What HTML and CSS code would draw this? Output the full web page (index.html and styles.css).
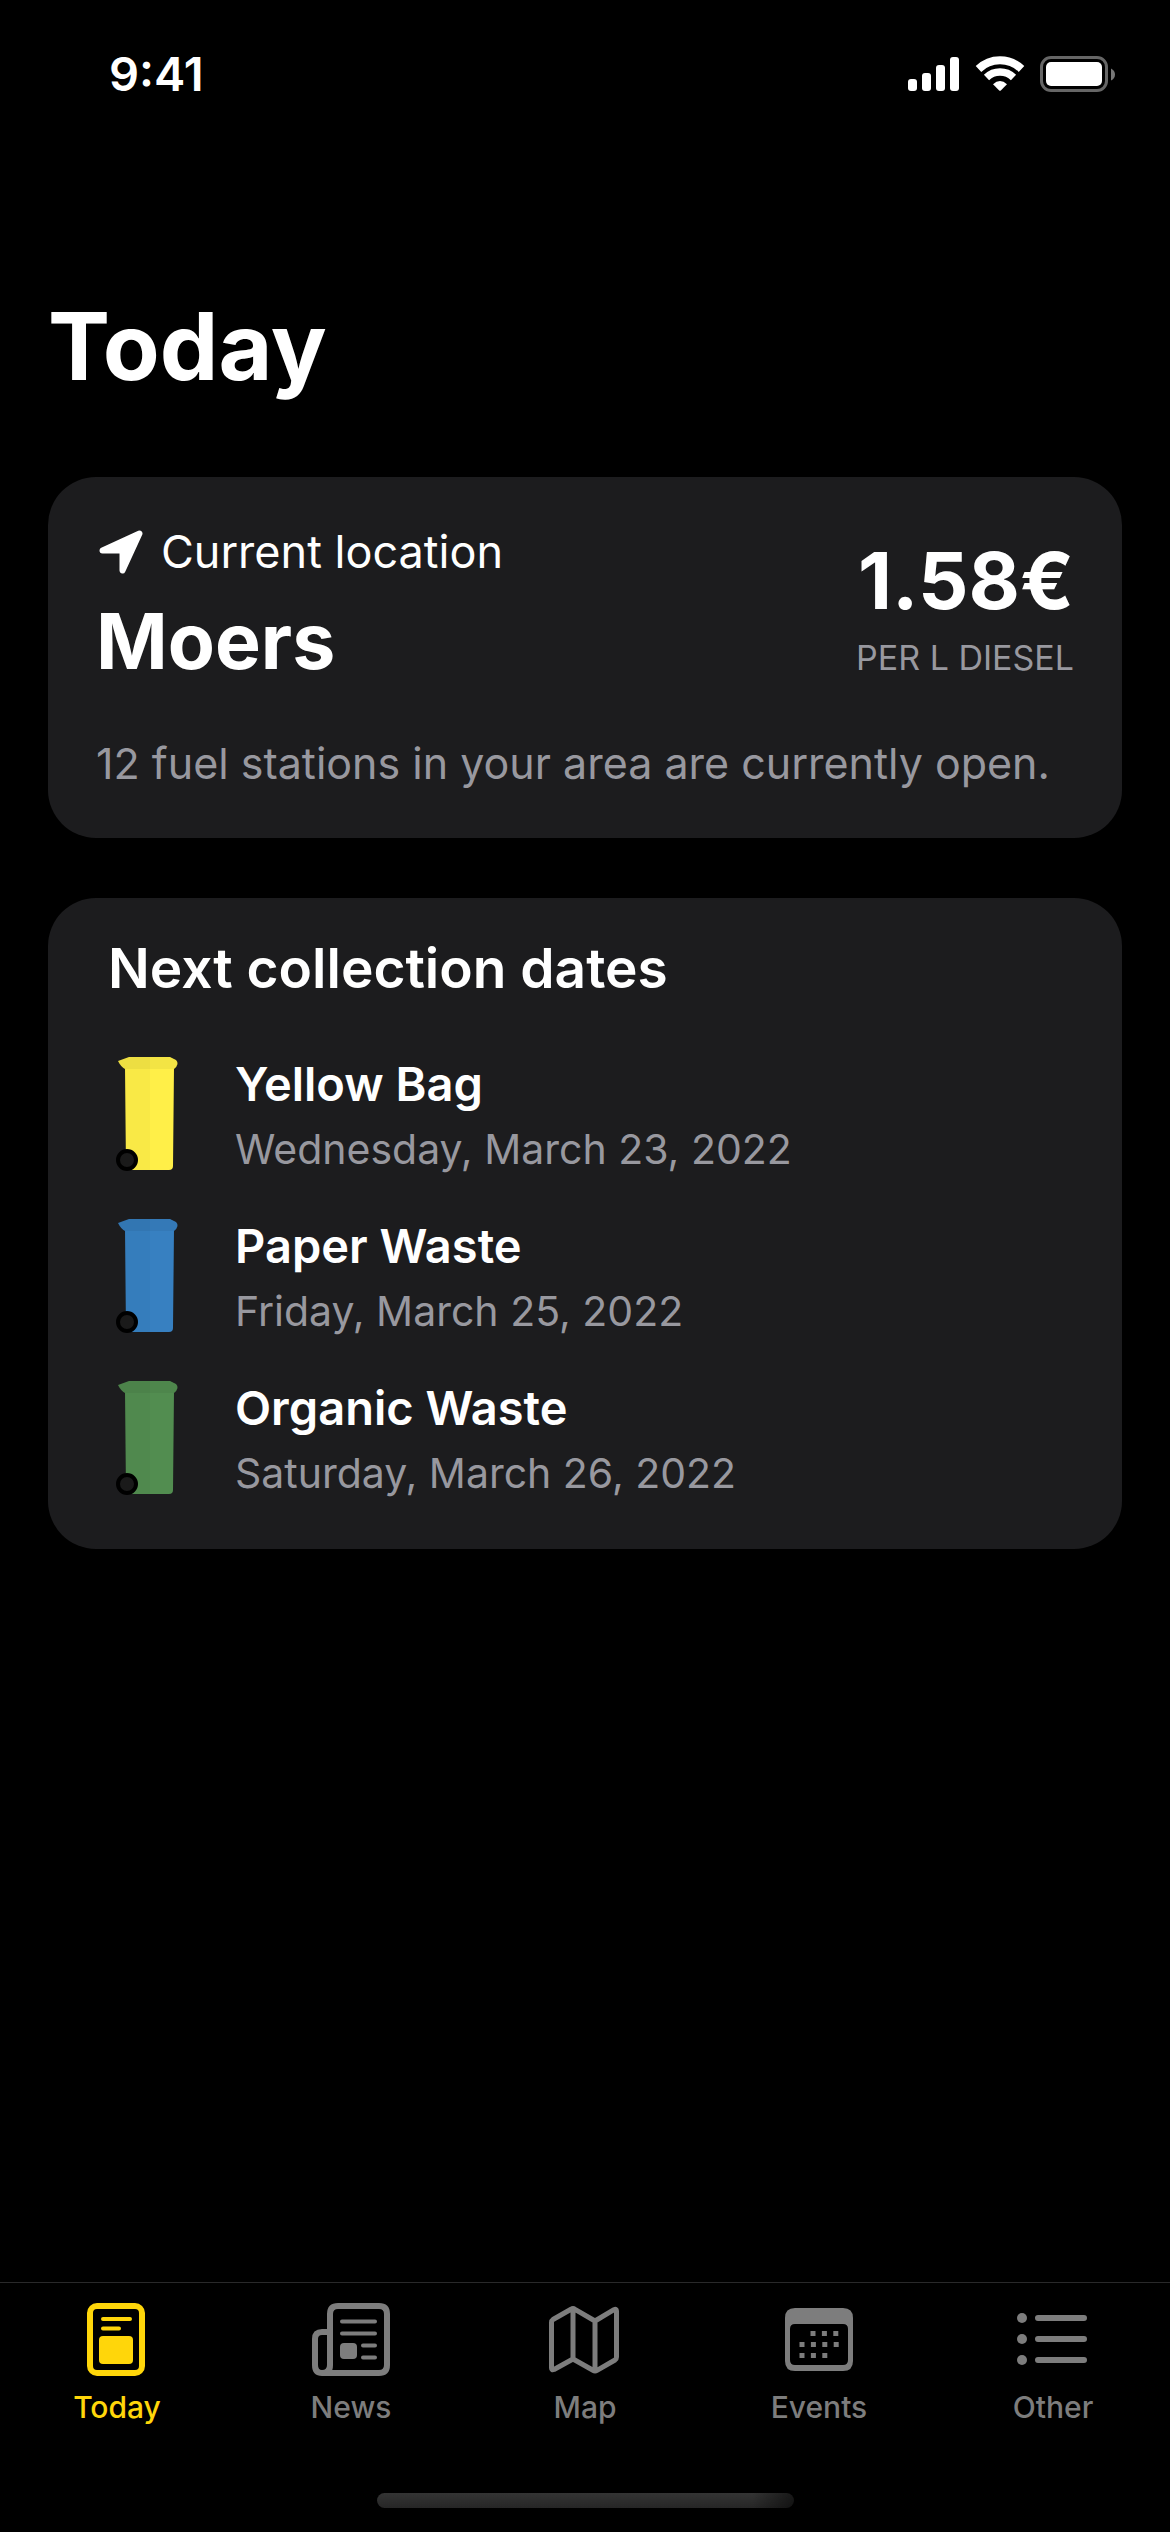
FILE: index.html
```html
<!DOCTYPE html>
<html lang="en">
<head>
<meta charset="utf-8">
<meta name="viewport" content="width=device-width, initial-scale=1">
<title>Today</title>
<link rel="stylesheet" href="styles.css">
</head>
<body>
<div class="app">
  <header class="status">
    <time class="clock">9:41</time>
    <div class="indicators">
      <svg width="52" height="36" viewBox="0 0 52 36" fill="#fff" aria-hidden="true">
        <rect x="0" y="23" width="9" height="12" rx="3"/><rect x="14" y="17" width="9" height="18" rx="3"/><rect x="28" y="9" width="9" height="26" rx="3"/><rect x="42" y="1" width="9" height="34" rx="3"/>
      </svg>
      <svg width="50" height="36" viewBox="0 0 50 36" fill="none" stroke="#fff" aria-hidden="true">
        <path d="M3.500 13A31 31 0 0 1 46.500 13" stroke-width="8"/><path d="M11.500 21.500A19.500 19.500 0 0 1 38.500 21.500" stroke-width="7.500"/><path d="M18 28.200Q25 22 32 28.200L25.800 34.500Q25 35.200 24.200 34.500Z" fill="#fff" stroke="none"/>
      </svg>
      <svg width="76" height="36" viewBox="0 0 76 36" aria-hidden="true">
        <rect x="1.500" y="1.500" width="65" height="33" rx="9.500" fill="none" stroke="#666" stroke-width="3"/><rect x="6" y="6" width="56" height="24" rx="5" fill="#fff"/><path d="M71 12.500q4 2 4 6t-4 6z" fill="#777"/>
      </svg>
    </div>
  </header>
  <main class="content">
    <h1 class="title">Today</h1>
    <section class="card fuel">
      <div class="summary">
        <div class="place">
          <p class="locating">
            <svg width="48" height="44" viewBox="-3 0 48 44" fill="#fff" stroke="#fff" stroke-width="6" stroke-linejoin="round" aria-hidden="true"><path d="M3.500 20.500L40.500 3.500L23.500 40.500V20.500Z"/></svg>
            Current location
          </p>
          <h2 class="city">Moers</h2>
        </div>
        <div class="price">
          <p class="amount">1.58€</p>
          <p class="unit">PER L DIESEL</p>
        </div>
      </div>
      <p class="note">12 fuel stations in your area are currently open.</p>
    </section>
    <section class="card dates">
      <h2 class="heading">Next collection dates</h2>
      <ul class="bins">
        <li class="bin yellow">
          <svg width="64" height="116" viewBox="0 0 64 116" aria-hidden="true"><path class="body" d="M9 10H58L57 109Q57 113 53 113H10Z"/><path class="lid" d="M2 4L13 0H54L60 3Q64 7 58 12H9Q5 10 2 4Z"/><path class="shade" d="M2 4L13 0H34V113H10L9 12Q5 10 2 4Z"/><circle cx="11" cy="103" r="9" fill="#1a1a1a" stroke="#000" stroke-width="4"/></svg>
          <div><h3 class="kind">Yellow Bag</h3><p class="day">Wednesday, March 23, 2022</p></div>
        </li>
        <li class="bin blue">
          <svg width="64" height="116" viewBox="0 0 64 116" aria-hidden="true"><path class="body" d="M9 10H58L57 109Q57 113 53 113H10Z"/><path class="lid" d="M2 4L13 0H54L60 3Q64 7 58 12H9Q5 10 2 4Z"/><path class="shade" d="M2 4L13 0H34V113H10L9 12Q5 10 2 4Z"/><circle cx="11" cy="103" r="9" fill="#1a1a1a" stroke="#000" stroke-width="4"/></svg>
          <div><h3 class="kind">Paper Waste</h3><p class="day">Friday, March 25, 2022</p></div>
        </li>
        <li class="bin green">
          <svg width="64" height="116" viewBox="0 0 64 116" aria-hidden="true"><path class="body" d="M9 10H58L57 109Q57 113 53 113H10Z"/><path class="lid" d="M2 4L13 0H54L60 3Q64 7 58 12H9Q5 10 2 4Z"/><path class="shade" d="M2 4L13 0H34V113H10L9 12Q5 10 2 4Z"/><circle cx="11" cy="103" r="9" fill="#1a1a1a" stroke="#000" stroke-width="4"/></svg>
          <div><h3 class="kind">Organic Waste</h3><p class="day">Saturday, March 26, 2022</p></div>
        </li>
      </ul>
    </section>
  </main>
  <footer class="bottom">
    <nav class="tabs">
      <a class="tab active" href="#today" aria-current="page">
        <svg width="80" height="74" viewBox="0 0 80 74" fill="none" stroke="currentColor" aria-hidden="true"><rect x="13" y="3" width="52" height="67" rx="7" stroke-width="6"/><path d="M26 16H53M26 25.500H42" stroke-width="4" stroke-linecap="round"/><rect x="22" y="33" width="34" height="28" rx="4" fill="currentColor" stroke="none"/></svg>
        Today
      </a>
      <a class="tab" href="#news">
        <svg width="80" height="74" viewBox="0 0 80 74" fill="none" stroke="currentColor" aria-hidden="true"><path d="M19 62V11Q19 3 27 3H68Q76 3 76 11V62Q76 70 68 70H11Q4 70 4 62V36Q4 29 11 29H19V62Q19 70 11 70" stroke-width="6"/><path d="M31 18.500H64M31 30.500H64M52 42.500H64M52 54.500H64" stroke-width="4" stroke-linecap="round"/><rect x="29" y="40" width="17" height="16" rx="4" fill="currentColor" stroke="none"/></svg>
        News
      </a>
      <a class="tab" href="#map">
        <svg width="80" height="74" viewBox="0 0 80 74" fill="none" stroke="currentColor" stroke-width="5" stroke-linejoin="round" aria-hidden="true"><path d="M6.500 19.500Q6.500 17.500 8 16.500L26 6.300Q28 5 30 6.300L50 18L69 6.700Q71.500 5.500 71.500 8V54Q71.500 56 70 57L52 67.300Q50 68.500 48 67.300L28 56L9 66.500Q6.500 67.500 6.500 65ZM28 6V56M50 18V68"/></svg>
        Map
      </a>
      <a class="tab" href="#events">
        <svg width="80" height="74" viewBox="0 0 80 74" fill="currentColor" aria-hidden="true"><path fill-rule="evenodd" d="M16 5H64Q74 5 74 15V58Q74 68 64 68H16Q6 68 6 58V15Q6 5 16 5ZM16 21Q11 21 11 26V57Q11 62 16 62H64Q69 62 69 57V26Q69 21 64 21Z"/><path d="M31.500 30.500H60M20.500 41.500H60M20.500 52.500H49" fill="none" stroke="currentColor" stroke-width="5" stroke-dasharray="5 6.400"/></svg>
        Events
      </a>
      <a class="tab" href="#other">
        <svg width="80" height="74" viewBox="0 0 80 74" fill="currentColor" aria-hidden="true"><circle cx="9" cy="15" r="5"/><circle cx="9" cy="36" r="5"/><circle cx="9" cy="57" r="5"/><path d="M25 15H71M25 36H71M25 57H71" stroke="currentColor" stroke-width="6" stroke-linecap="round"/></svg>
        Other
      </a>
    </nav>
    <div class="home"></div>
  </footer>
</div>
</body>
</html>
```

FILE: styles.css
```css
* { box-sizing: border-box; margin: 0; padding: 0; }
body { background: #000; color: #fff; font-family: Inter, "Liberation Sans", sans-serif; }
svg { display: block; flex: none; }
.app { min-height: 100vh; display: flex; flex-direction: column; }
.status { display: flex; justify-content: space-between; align-items: center; padding: 44px 54px 0 109px; }
.clock { font-size: 47px; line-height: 60px; font-weight: 600; }
.indicators { display: flex; align-items: center; gap: 15px; }
.content { flex: 1; padding: 188px 48px 60px; }
.title { font-size: 93px; line-height: 108px; font-weight: 700; margin-bottom: 77px; }
.card { background: #1c1c1e; border-radius: 48px; }
.fuel { padding: 48px; margin-bottom: 60px; }
.summary { display: flex; justify-content: space-between; align-items: center; margin-bottom: 49px; }
.place { display: grid; gap: 16px; }
.locating { display: flex; align-items: center; gap: 17px; font-size: 45px; line-height: 54px; }
.city { font-size: 77px; line-height: 92px; font-weight: 700; }
.price { display: grid; gap: 12px; text-align: right; }
.amount { font-size: 79px; line-height: 92px; font-weight: 700; }
.unit { font-size: 34px; line-height: 40px; color: #98989f; }
.note { font-size: 43px; line-height: 54px; color: #98989f; }
.dates { padding: 36px 60px 45px; }
.heading { font-size: 55px; line-height: 68px; font-weight: 600; margin-bottom: 48px; }
.bins { list-style: none; display: grid; gap: 32px; }
.bin { display: flex; align-items: center; gap: 55px; }
.bin svg { margin-left: 8px; }
.kind { font-size: 47px; line-height: 68px; font-weight: 600; }
.day { font-size: 41px; line-height: 62px; color: #98989f; }
.shade { fill: #000; opacity: .025; }
.yellow .body { fill: #ffef48; } .yellow .lid { fill: #f3e444; }
.blue .body { fill: #3780c1; } .blue .lid { fill: #3479b7; }
.green .body { fill: #528d50; } .green .lid { fill: #4e864c; }
.bottom { border-top: 1px solid #29292a; }
.tabs { display: grid; grid-template-columns: repeat(5, 1fr); padding-top: 20px; }
.tab { display: flex; flex-direction: column; align-items: center; gap: 12px; color: #7d7d7d; text-decoration: none; font-size: 30px; line-height: 36px; font-weight: 500; }
.active { color: #ffd60a; }
.home { width: 417px; height: 15px; border-radius: 8px; margin: 68px auto 24px; background: linear-gradient(90deg, transparent 90%, #0008), linear-gradient(#343434, #262626); }
```
